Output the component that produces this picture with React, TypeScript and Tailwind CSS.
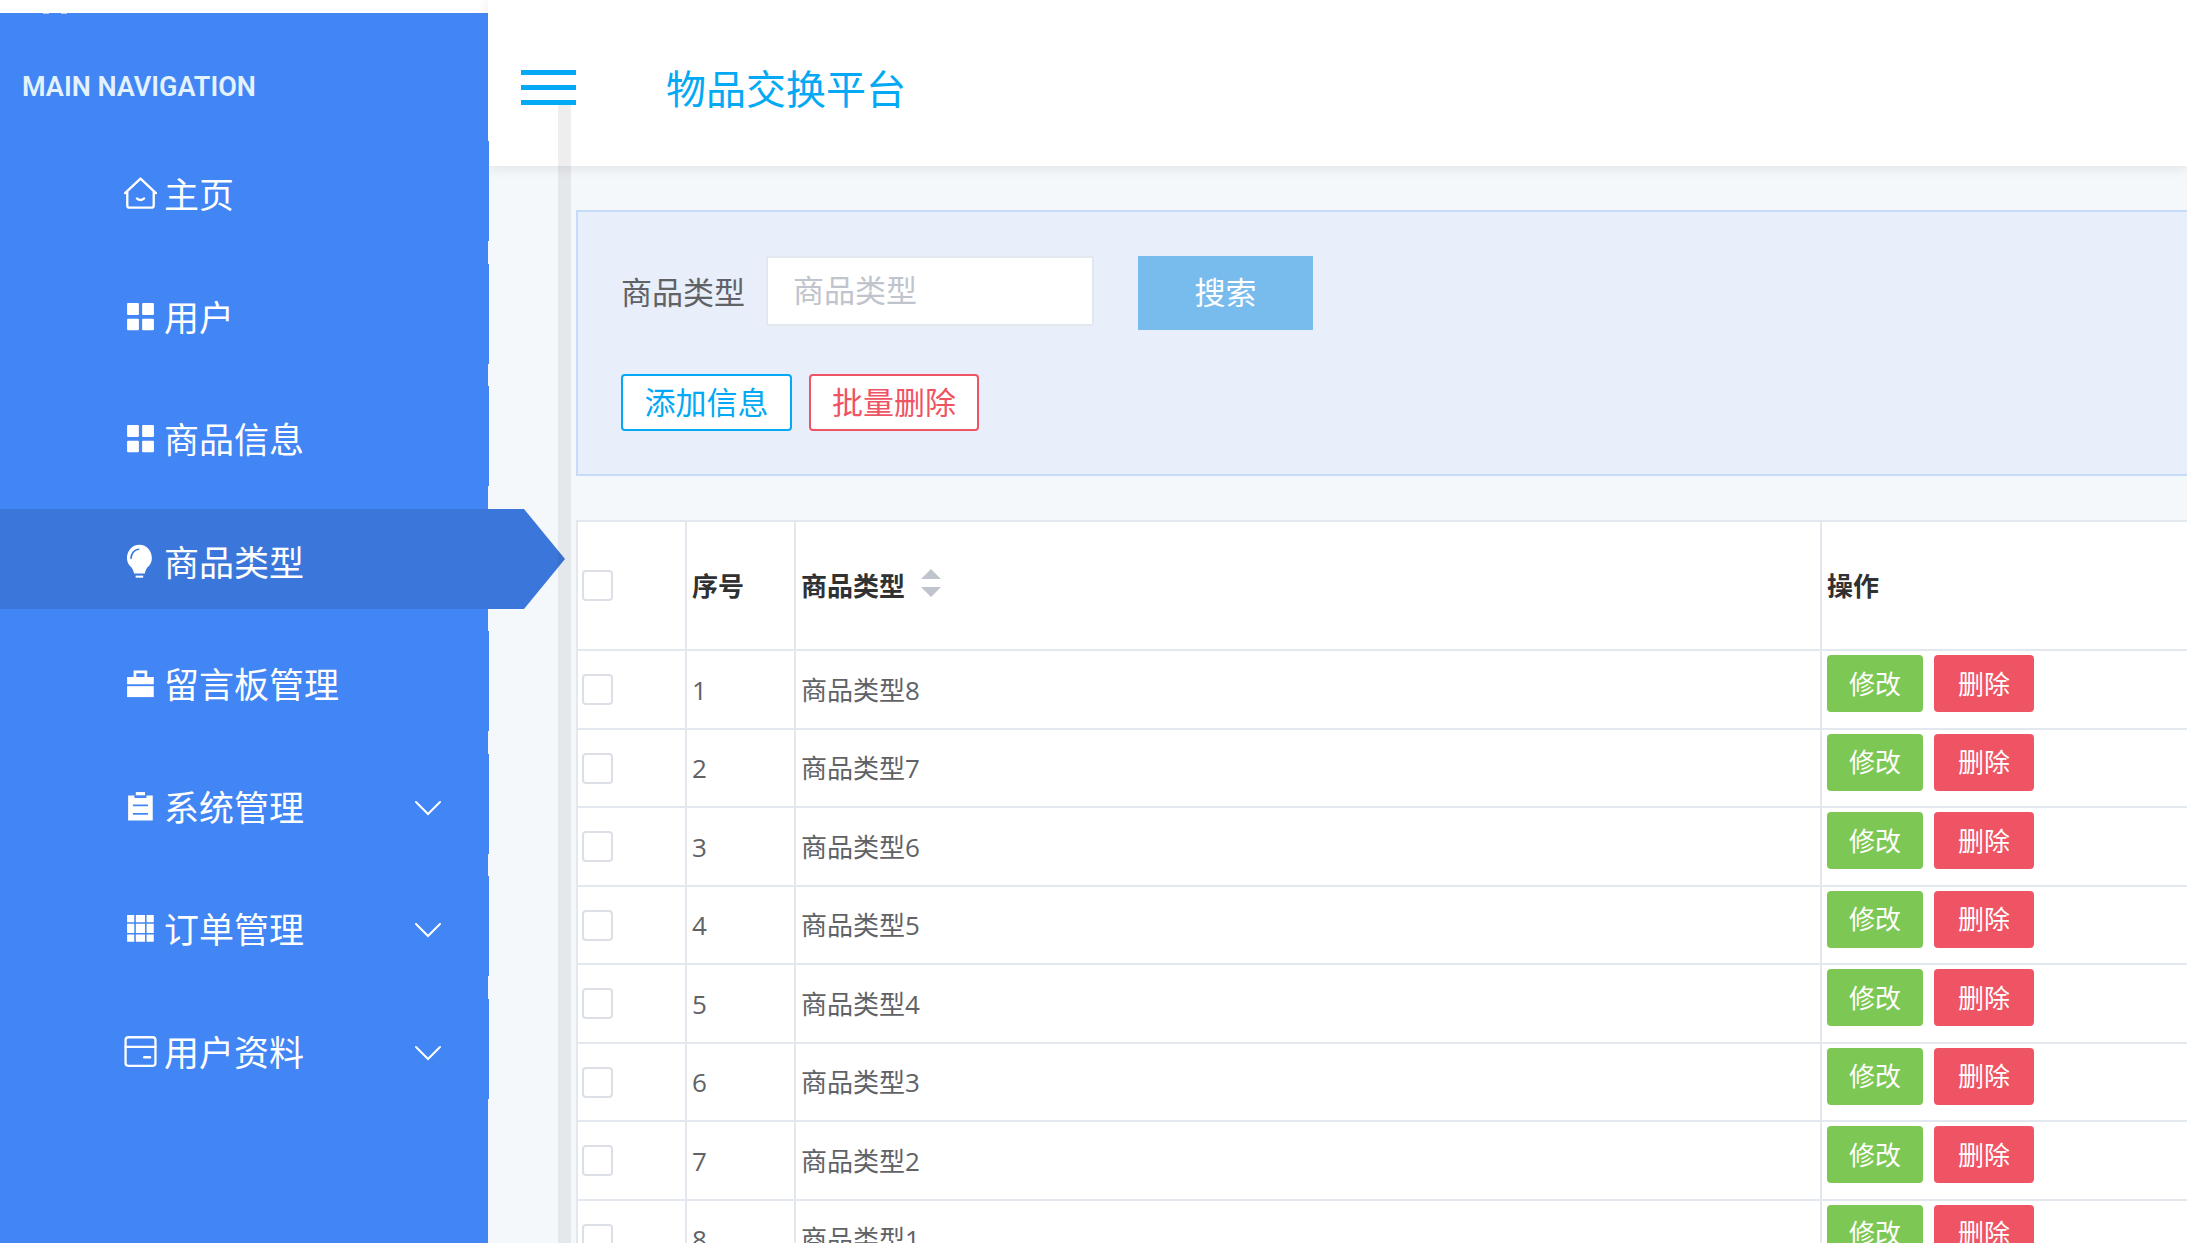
import React from "react";

type IconProps = { children: React.ReactNode };

const Glyph = ({ children }: IconProps) => (
  <svg viewBox="0 0 1024 1024" className="mb-1 h-[35px] w-[35px] shrink-0" fill="currentColor" aria-hidden="true">
    {children}
  </svg>
);

const HomeIcon = () => (
  <Glyph>
    <g fill="none" stroke="currentColor" strokeWidth="68" strokeLinecap="round" strokeLinejoin="round">
      <path d="M60 500 L512 75 L964 500" />
      <path d="M125 470 V860 Q125 925 190 925 H834 Q899 925 899 860 V470" />
      <path d="M405 655 Q512 745 619 655" />
    </g>
  </Glyph>
);

const MenuIcon = () => (
  <Glyph>
    <rect x="120" y="120" width="345" height="350" rx="28" />
    <rect x="560" y="120" width="345" height="350" rx="28" />
    <rect x="120" y="575" width="345" height="340" rx="28" />
    <rect x="560" y="575" width="345" height="340" rx="28" />
  </Glyph>
);

const BulbIcon = () => (
  <Glyph>
    <path d="M480 20 C270 20 115 200 115 410 C115 540 180 630 250 690 C290 750 310 800 320 860 H640 C650 800 670 750 710 690 C790 620 845 540 845 410 C845 200 690 20 480 20 Z" />
    <rect x="370" y="925" width="220" height="60" />
    <path d="M235 420 C235 280 330 165 455 155" fill="none" stroke="#3b77db" strokeWidth="48" strokeLinecap="round" />
  </Glyph>
);

const CaseIcon = () => (
  <Glyph>
    <path d="M120 325 H310 V130 H710 V325 H900 V535 H120 Z M390 210 V325 H630 V210 Z" fillRule="evenodd" />
    <rect x="120" y="590" width="780" height="320" />
  </Glyph>
);

const OrderIcon = () => (
  <Glyph>
    <path
      d="M150 190 H335 V265 H685 V190 H870 V920 H150 Z M290 455 V505 H730 V455 Z M290 705 V755 H730 V705 Z"
      fillRule="evenodd"
    />
    <rect x="375" y="90" width="270" height="95" />
  </Glyph>
);

const GridIcon = () => (
  <Glyph>
    <path d="M120 120 H330 V330 H120 Z M375 120 H645 V330 H375 Z M690 120 H900 V330 H690 Z M120 375 H330 V645 H120 Z M375 375 H645 V645 H375 Z M690 375 H900 V645 H690 Z M120 690 H330 V900 H120 Z M375 690 H645 V900 H375 Z M690 690 H900 V900 H690 Z" />
  </Glyph>
);

const CardIcon = () => (
  <Glyph>
    <g fill="none" stroke="currentColor" strokeWidth="66" strokeLinecap="round">
      <rect x="75" y="95" width="874" height="834" rx="80" />
      <path d="M75 380 H949" />
      <path d="M620 680 H790" strokeWidth="70" />
    </g>
  </Glyph>
);

const Chevron = () => (
  <svg viewBox="0 0 28 16" className="ml-auto h-4 w-7" fill="none" stroke="currentColor" strokeWidth="2" strokeLinecap="round" aria-hidden="true">
    <path d="M2 2 L14 14 L26 2" />
  </svg>
);

const navItems = [
  { label: "主页", icon: HomeIcon },
  { label: "用户", icon: MenuIcon },
  { label: "商品信息", icon: MenuIcon },
  { label: "商品类型", icon: BulbIcon, active: true },
  { label: "留言板管理", icon: CaseIcon },
  { label: "系统管理", icon: OrderIcon, nested: true },
  { label: "订单管理", icon: GridIcon, nested: true },
  { label: "用户资料", icon: CardIcon, nested: true },
];

const rows = [8, 7, 6, 5, 4, 3, 2, 1].map((n, i) => ({ no: i + 1, name: `商品类型${n}` }));

const Sidebar = () => (
  <aside className="relative z-10 mt-[13px] w-[488px] shrink-0 bg-[#4285f4] text-white">
    <div className="absolute top-0 left-[43px] flex gap-3 opacity-60" aria-hidden="true">
      <span className="h-px w-1.5 bg-white" />
      <span className="h-px w-1.5 bg-white" />
    </div>
    <h2 className="px-[22px] pt-[54px] font-[Roboto] text-[27px] leading-[40px] font-semibold text-[#e3f2fd]">MAIN NAVIGATION</h2>
    <nav className="mt-[34px]">
      <ul>
        {navItems.map(({ label, icon: Icon, active, nested }) => (
          <li key={label} className="odd:mb-[23px] even:mb-[22px]">
            <a
              href="#"
              aria-current={active ? "page" : undefined}
              className={
                active
                  ? "flex h-[100px] w-[565px] items-center gap-1.5 bg-[#3b77db] pt-2 pl-[123px] [clip-path:polygon(0_0,524px_0,100%_50%,524px_100%,0_100%)]"
                  : "flex h-[100px] w-[489px] items-center gap-1.5 bg-[#4285f4] pt-2 pr-[47px] pl-[123px]"
              }
            >
              <Icon />
              <span className="text-[35px] leading-[50px]">{label}</span>
              {nested && <Chevron />}
            </a>
          </li>
        ))}
      </ul>
    </nav>
  </aside>
);

const Header = () => (
  <header className="flex h-[166px] items-center bg-white pt-2 pl-[33px] shadow-[0_2px_12px_rgba(0,0,0,0.09)]">
    <button type="button" aria-label="切换导航" className="flex w-[55px] flex-col gap-[10px]">
      <span className="h-[5px] bg-[#03a9f4]" />
      <span className="h-[5px] bg-[#03a9f4]" />
      <span className="h-[5px] bg-[#03a9f4]" />
    </button>
    <h1 className="ml-[90px] pt-1 text-[40px] leading-[60px] text-[#03a9f4]">物品交换平台</h1>
  </header>
);

const SearchPanel = () => (
  <section className="border-2 border-r-0 border-[#c6dafa] bg-[#e8effa] px-[43px] pt-11 pb-[43px] text-[31px] leading-[46px]">
    <form className="flex items-start" onSubmit={(e) => e.preventDefault()}>
      <label htmlFor="type" className="mr-[21px] pt-[13px] text-[#606266]">
        商品类型
      </label>
      <input
        id="type"
        type="text"
        placeholder="商品类型"
        className="h-[70px] w-[328px] border-2 border-[#e2e8ee] bg-white px-[25px] pb-0.5 text-[#606266] placeholder:text-[#c0c4cc]"
      />
      <button type="submit" className="ml-11 h-[74px] w-[175px] bg-[#78bbed] pb-0.5 text-white">
        搜索
      </button>
    </form>
    <div className="mt-11 flex gap-[17px]">
      <button type="button" className="h-[57px] w-[171px] rounded border-2 border-[#03a9f4] bg-white pb-0.5 text-[#03a9f4]">
        添加信息
      </button>
      <button type="button" className="h-[57px] w-[170px] rounded border-2 border-[#ef5464] bg-white pb-0.5 text-[#ef5464]">
        批量删除
      </button>
    </div>
  </section>
);

const Checkbox = ({ label }: { label: string }) => (
  <input
    type="checkbox"
    aria-label={label}
    className="block h-[31px] w-[31px] appearance-none rounded border-2 border-[#dcdfe6] bg-white checked:bg-[#03a9f4]"
  />
);

const checkCell = "border-r-2 border-b-2 border-[#e2e8ee] pl-1 text-left";
const cell = "border-r-2 border-b-2 border-[#e2e8ee] pl-[5px] text-left";
const lastCell = "border-b-2 border-[#e2e8ee] pl-[5px] text-left";

const TypeTable = () => (
  <table className="w-full table-fixed border-separate border-spacing-0 border-t-2 border-l-2 border-[#e2e8ee] bg-white text-[26px] leading-[36px] text-[#606266]">
    <colgroup>
      <col className="w-[109px]" />
      <col className="w-[109px]" />
      <col />
      <col className="w-[365px]" />
    </colgroup>
    <thead>
      <tr className="h-[129px] text-[#303133]">
        <th className={checkCell}>
          <Checkbox label="全选" />
        </th>
        <th className={cell}>序号</th>
        <th className={cell}>
          <span className="flex items-center gap-4">
            商品类型
            <svg viewBox="0 0 20 28" className="mb-1.5 h-7 w-5" fill="#c0c4cc" aria-hidden="true">
              <path d="M10 0 L20 10 H0 Z M0 18 H20 L10 28 Z" />
            </svg>
          </span>
        </th>
        <th className={lastCell}>操作</th>
      </tr>
    </thead>
    <tbody>
      {rows.map(({ no, name }) => (
        <tr key={no} className="odd:h-[79px] even:h-[78px]">
          <td className={checkCell}>
            <Checkbox label={name} />
          </td>
          <td className={cell}>{no}</td>
          <td className={cell}>{name}</td>
          <td className={lastCell}>
            <div className="mb-3 flex gap-[11px] text-white">
              <button type="button" className="h-[57px] w-24 rounded bg-[#7dc855]">
                修改
              </button>
              <button type="button" className="h-[57px] w-[100px] rounded bg-[#ef5464]">
                删除
              </button>
            </div>
          </td>
        </tr>
      ))}
    </tbody>
  </table>
);

export default function App() {
  return (
    <div className="relative flex h-screen overflow-hidden bg-white font-['Open_Sans','Noto_Sans_CJK_SC',sans-serif]">
      <Sidebar />
      <div className="min-w-0 flex-1 bg-[#f4f8fb]">
        <Header />
        <main className="flex flex-col gap-11 pt-11 pl-[88px]">
          <SearchPanel />
          <TypeTable />
        </main>
      </div>
      <div className="pointer-events-none absolute top-[105px] bottom-0 left-[558px] z-20 w-[13px] bg-[#1e0a1e]/7" />
    </div>
  );
}
